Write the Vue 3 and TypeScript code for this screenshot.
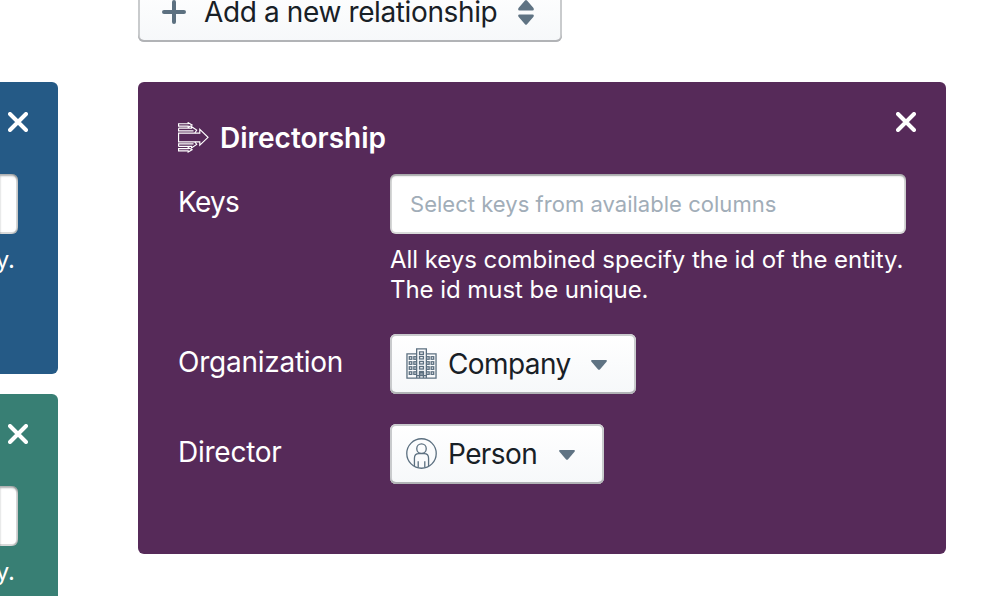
<script setup lang="ts">
interface Field {
  label: string
  value: string
  icon: 'company' | 'person'
}

const fields: Field[] = [
  { label: 'Organization', value: 'Company', icon: 'company' },
  { label: 'Director', value: 'Person', icon: 'person' },
]

const sideCards: string[] = ['blue', 'green']
const windowColumns: number[] = [4.2, 8.9, 22.1, 26.8]
const windowRows: number[] = [9, 14.2, 19.4, 24.6]
</script>

<template>
  <main class="page">
    <aside class="side">
      <section v-for="tone in sideCards" :key="tone" class="side-card" :class="tone">
        <button class="close" aria-label="Remove">
          <svg viewBox="0 0 20 20" width="20" height="20"><path d="M2 2L18 18M18 2L2 18" /></svg>
        </button>
        <div class="side-input"></div>
        <span class="side-help">y.</span>
      </section>
    </aside>

    <div class="content">
      <button class="btn add">
        <svg class="plus" viewBox="0 0 24 24" width="24" height="24"><path d="M2 12H22M12 2V22" /></svg>
        <span class="add-text">Add a new relationship</span>
        <svg class="sort" viewBox="0 0 16 25" width="16" height="25">
          <path d="M7 .6Q8 -.4 9 .6L15.5 8Q16.5 10.5 14.5 10.5H1.5Q-.5 10.5 .5 8ZM7 24.2Q8 25.2 9 24.2L15.5 16.8Q16.5 14.5 14.5 14.5H1.5Q-.5 14.5 .5 16.8Z" />
        </svg>
      </button>

      <section class="card">
        <header class="head">
          <svg class="arrows" viewBox="0 0 32 32" width="31" height="31">
            <path d="M.6 11.5H22.5V7.6L31 15.8L22.5 24V20.5H.6Z" />
            <path d="M.6 1.8H10.5V.7L14.5 3L10.5 5.3V4.2H.6ZM.6 6.4H14V4.8L19.3 8.4L17.4 11.4M.6 6.4V9.2H16" />
            <path d="M.6 29.8H10.5V30.9L14.5 28.6L10.5 26.3V27.4H.6ZM.6 25.2H14V26.8L19.3 23.2L17.4 20.6M.6 25.2V22.6H16" />
          </svg>
          <h1>Directorship</h1>
          <button class="close" aria-label="Remove">
            <svg viewBox="0 0 20 20" width="20" height="20"><path d="M2 2L18 18M18 2L2 18" /></svg>
          </button>
        </header>

        <div class="row keys">
          <label class="label tight">Keys</label>
          <div class="control">
            <div class="input"><span class="placeholder">Select keys from available columns</span></div>
            <p class="help">All keys combined specify the id of the entity.<br />The id must be unique.</p>
          </div>
        </div>

        <div v-for="f in fields" :key="f.label" class="row">
          <label class="label">{{ f.label }}</label>
          <button class="btn" :class="f.icon">
            <svg v-if="f.icon === 'company'" class="glyph" viewBox="0 0 32 32" width="31" height="31">
              <path d="M11 6H1V31H31V6H21M11 31V1H21V31M11 28.5H21" />
              <template v-for="y in windowRows" :key="y">
                <rect v-for="x in windowColumns" :key="x" :x="x - 0.8" :y="y" width="2.6" height="2.6" />
                <rect x="14" :y="y - 0.3" width="4" height="2.6" />
              </template>
              <path d="M14 4H18V6.5H14ZM14 31V25.5H18V31" />
            </svg>
            <svg v-else class="glyph" viewBox="0 0 32 32" width="31" height="31">
              <circle cx="16" cy="16" r="15.2" />
              <circle cx="16" cy="11" r="4.9" />
              <path d="M8.7 29V21Q8.7 16.2 13.2 16.2H18.8Q23.3 16.2 23.3 21V29M12.6 24V30.5M19.4 24V30.5" />
            </svg>
            <span class="value">{{ f.value }}</span>
            <svg class="caret" viewBox="0 0 16 10" width="16" height="10"><path d="M1 0H15Q16.5 .3 15.5 1.7L8.9 9.4Q8 10.3 7.1 9.4L.5 1.7Q-.5 .3 1 0Z" /></svg>
          </button>
        </div>
      </section>
    </div>
  </main>
</template>

<style>
body {
  background: #fff;
}
</style>

<style scoped>
* {
  box-sizing: border-box;
}
.page {
  width: 986px;
  height: 596px;
  overflow: hidden;
  display: flex;
  gap: 80px;
  font-family: Inter, "Liberation Sans", sans-serif;
  font-size: 28px;
  background: #fff;
}
button {
  font: inherit;
  border: 0;
}
svg {
  display: block;
  flex: none;
}
.side {
  width: 58px;
  padding-top: 82px;
  display: flex;
  flex-direction: column;
  gap: 20px;
  flex: none;
}
.side-card {
  height: 292px;
  flex: none;
  display: flex;
  flex-direction: column;
  align-items: flex-end;
  padding: 30px 40px 0 0;
  color: #fff;
  border-radius: 0 6px 6px 0;
}
.blue {
  background: #255a86;
}
.green {
  background: #387f74;
}
.close {
  width: 20px;
  height: 20px;
  padding: 0;
  background: none;
}
.close svg {
  fill: none;
  stroke: #fff;
  stroke-width: 4;
  stroke-linecap: round;
}
.side-card .close {
  margin-right: -10px;
}
.side-input {
  width: 18px;
  height: 60px;
  margin-top: 42px;
  background: #fff;
  border-radius: 0 6px 6px 0;
  box-shadow: inset -2px 0 0 rgba(16, 22, 26, 0.16), inset 0 -2px 0 rgba(16, 22, 26, 0.16), inset 0 2px 2px rgba(16, 22, 26, 0.35);
}
.side-help {
  margin: 11px 3px 0 0;
  font-size: 24px;
  line-height: 30px;
}
.content {
  width: 808px;
  display: flex;
  flex-direction: column;
  align-items: flex-start;
}
.btn {
  height: 60px;
  display: flex;
  align-items: center;
  border-radius: 6px;
  color: #182026;
  padding: 0 0 0 16px;
  white-space: nowrap;
  background: linear-gradient(#fff, #f6f8fa);
  box-shadow: inset 0 -2px 0 #b1b3b6, inset 0 0 0 2px #c9cbcd;
}
.add {
  width: 424px;
  margin: -18px 0 40px;
  padding: 0 28px 0 24px;
}
.plus {
  fill: none;
  stroke: #5c7080;
  stroke-width: 4;
  stroke-linecap: round;
}
.add-text {
  width: 295px;
  margin: 0 19px 0 18px;
  text-align: left;
  letter-spacing: -0.38px;
}
.sort,
.caret {
  fill: #5f7383;
}
.caret {
  margin-top: 2px;
}
.card {
  width: 808px;
  height: 472px;
  padding: 40px;
  background: #562a59;
  border-radius: 6px;
  color: #fff;
}
.head {
  height: 32px;
  display: flex;
  align-items: center;
}
.arrows {
  align-self: flex-start;
  fill: none;
  stroke: #fff;
  stroke-width: 1.2;
}
h1 {
  margin: 0 auto 0 11px;
  font-size: 28px;
  line-height: 32px;
  font-weight: 600;
}
.head .close {
  align-self: flex-start;
  margin: -10px -10px 0 0;
}
.row {
  display: grid;
  grid-template-columns: 212px 1fr;
  justify-items: start;
  align-items: start;
  margin-bottom: 30px;
}
.keys {
  margin: 20px 0 29px;
}
.label {
  line-height: 34px;
  padding-top: 11px;
  letter-spacing: -0.25px;
}
.tight {
  letter-spacing: -0.7px;
}
.control {
  width: 516px;
}
.input {
  height: 60px;
  display: flex;
  align-items: center;
  padding-left: 20px;
  border-radius: 6px;
  background: #fff;
  box-shadow: inset 0 0 0 2px rgba(16, 22, 26, 0.16), inset 0 2px 2px rgba(16, 22, 26, 0.25);
}
.placeholder {
  font-size: 22px;
  letter-spacing: 0.03px;
  color: #a1adb8;
}
.help {
  margin: 11px 0 0;
  font-size: 24px;
  line-height: 30px;
  letter-spacing: -0.05px;
  white-space: nowrap;
}
.company {
  width: 246px;
}
.person {
  width: 214px;
}
.glyph {
  align-self: flex-start;
  margin-top: 14px;
  fill: none;
  stroke: #5c7080;
  stroke-width: 1.35;
}
.value {
  width: 123px;
  margin: 0 20px 0 11px;
  padding: 0;
  text-align: left;
  letter-spacing: -0.6px;
}
.person .value {
  width: 91px;
}
</style>
